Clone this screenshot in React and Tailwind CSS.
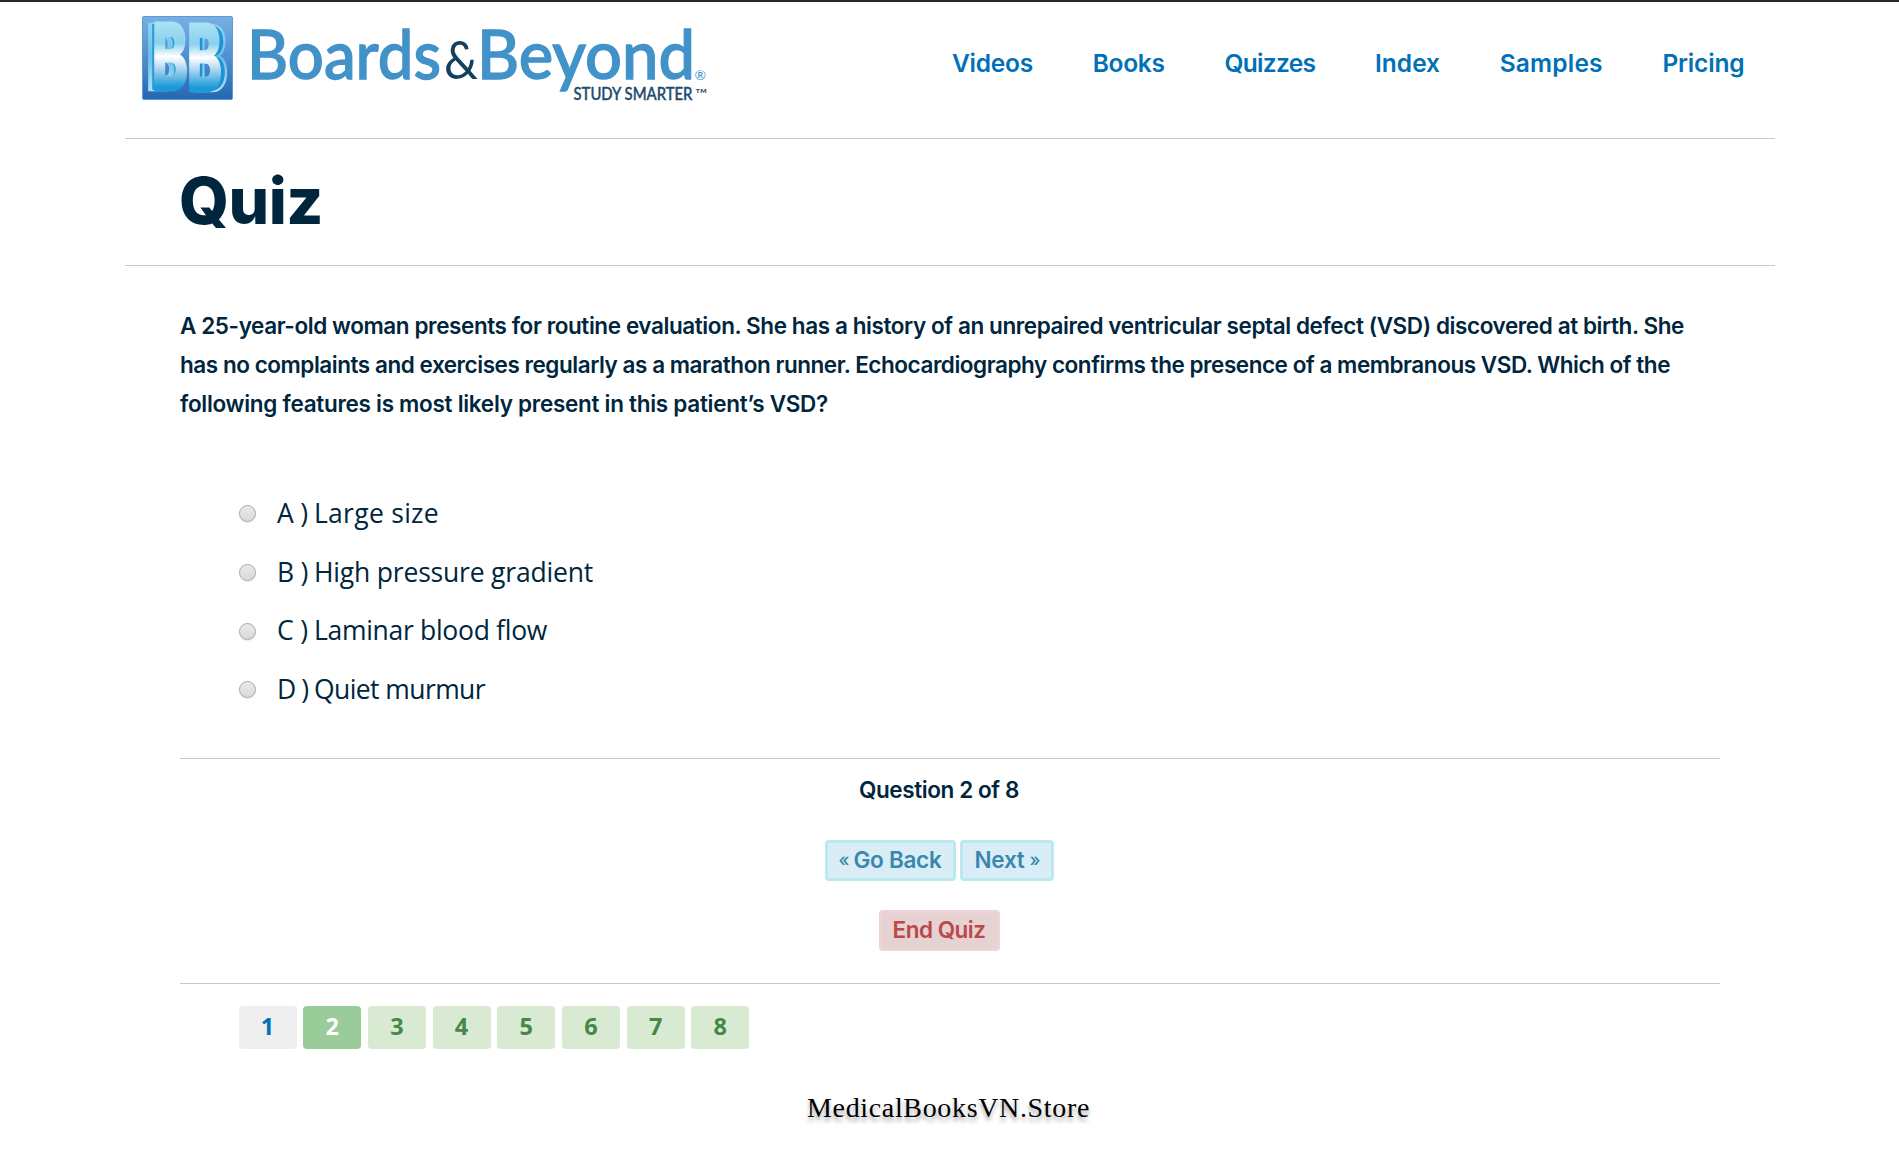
import { useLayoutEffect, useRef, useState } from "react";

const NAV = [
  { label: "Videos", width: 81 },
  { label: "Books", width: 72 },
  { label: "Quizzes", width: 91 },
  { label: "Index", width: 65 },
  { label: "Samples", width: 103 },
  { label: "Pricing", width: 82 },
];

const QUESTION = [
  {
    text: "A 25-year-old woman presents for routine evaluation. She has a history of an unrepaired ventricular septal defect (VSD) discovered at birth. She",
    width: 1504,
  },
  {
    text: "has no complaints and exercises regularly as a marathon runner. Echocardiography confirms the presence of a membranous VSD. Which of the",
    width: 1490,
  },
  {
    text: "following features is most likely present in this patient’s VSD?",
    width: 648,
  },
];

const OPTIONS = [
  { key: "A )", text: "Large size", width: 125 },
  { key: "B )", text: "High pressure gradient", width: 279 },
  { key: "C )", text: "Laminar blood flow", width: 233 },
  { key: "D )", text: "Quiet murmur", width: 171 },
];

// Spreads or tightens the tracking so that the text fills the given width.
function Fit({ width, className = "", children }) {
  const ref = useRef(null);
  const [spacing, setSpacing] = useState(0);
  useLayoutEffect(() => {
    const natural = ref.current.getBoundingClientRect().width;
    setSpacing((width - natural) / children.length);
  }, []);
  return (
    <span
      ref={ref}
      className={"inline-block whitespace-pre " + className}
      style={{ letterSpacing: spacing + "px" }}
    >
      {children}
    </span>
  );
}

function LogoB({ x, y, w, h, fill, stroke }) {
  return (
    <text
      transform={`translate(${x} ${y}) scale(${w / 61} ${h / 72.7})`}
      fontFamily="Inter, sans-serif"
      fontWeight="800"
      fontSize="100"
      fill={fill}
      stroke={stroke}
      strokeWidth={stroke ? 3 : 0}
      strokeLinejoin="round"
    >
      B
    </text>
  );
}

function Logo() {
  return (
    <svg width="570" height="92" viewBox="140 12 570 92" className="block">
      <defs>
        <linearGradient id="tile" x1="0" y1="0" x2="0" y2="1">
          <stop offset="0" stopColor="#78b0e2" />
          <stop offset="0.5" stopColor="#4f8fd0" />
          <stop offset="1" stopColor="#2666b0" />
        </linearGradient>
        <linearGradient id="face" gradientUnits="userSpaceOnUse" x1="0" y1="-73" x2="0" y2="0">
          <stop offset="0" stopColor="#a8e2f4" />
          <stop offset="0.3" stopColor="#8bd0ee" />
          <stop offset="0.5" stopColor="#ffffff" />
          <stop offset="0.64" stopColor="#c3e0f4" />
          <stop offset="0.95" stopColor="#1b9ad9" />
        </linearGradient>
        <linearGradient id="side" gradientUnits="userSpaceOnUse" x1="0" y1="-73" x2="0" y2="0">
          <stop offset="0" stopColor="#8fd3f0" />
          <stop offset="0.5" stopColor="#6cc0ea" />
          <stop offset="1" stopColor="#a9dff5" />
        </linearGradient>
      </defs>
      <rect x="142.5" y="16.5" width="90" height="83" rx="1.5" fill="url(#tile)" stroke="#5b9bd6" />
      <LogoB x={146} y={90} w={32} h={66} fill="url(#side)" stroke="url(#side)" />
      <LogoB x={149} y={90} w={34} h={66} fill="#2b9cdb" />
      <LogoB x={152} y={90} w={33} h={67} fill="url(#face)" stroke="url(#face)" />
      <LogoB x={191} y={91} w={34} h={66} fill="url(#side)" stroke="url(#side)" />
      <LogoB x={189.5} y={91} w={34} h={66} fill="#1f93d6" />
      <LogoB x={187} y={91} w={32} h={67} fill="url(#face)" stroke="url(#face)" />
      <g fontFamily="Lato, sans-serif">
        <g fill="#4292ca" stroke="#4292ca" strokeWidth="1.3" fontSize="67" fontWeight="500">
          <text x="247" y="78.5" textLength="194" lengthAdjust="spacingAndGlyphs">Boards</text>
          <text x="477" y="78.5" textLength="218" lengthAdjust="spacingAndGlyphs">Beyond</text>
        </g>
        <text x="444" y="79" fontSize="53" fill="#143f5f" textLength="34" lengthAdjust="spacingAndGlyphs">&amp;</text>
        <text x="694.5" y="80" fontSize="14" fill="#4292ca">®</text>
        <text x="573.5" y="100" fontSize="16.5" fontWeight="500" fill="#1d4a6b" stroke="#1d4a6b" strokeWidth="0.4" textLength="119" lengthAdjust="spacingAndGlyphs">STUDY SMARTER</text>
        <text x="695" y="99" fontSize="14" fill="#1d4a6b" textLength="12" lengthAdjust="spacingAndGlyphs">™</text>
      </g>
    </svg>
  );
}

function Radio() {
  return (
    <span className="mt-[1px] block size-[17px] rounded-full border border-[#a9a9a9] bg-linear-to-b from-[#e9e9e9] to-[#dadada] shadow-[0_1px_1px_rgba(0,0,0,0.1)]" />
  );
}

export default function App() {
  return (
    <div className="h-[1160px] w-[1899px] overflow-hidden border-t-2 border-[#2a2829] bg-white font-['Inter',sans-serif] text-[#00263e]">
      <header className="ml-[125px] flex h-[137px] w-[1650px] items-start border-b border-[#c8c8c8] pl-[15px] pt-[10px]">
        <Logo />
        <nav className="ml-[242px] mt-[32px] flex gap-[59.7px] text-[24.5px] font-semibold leading-[38px] text-[#0070b8]">
          {NAV.map((n) => (
            <a key={n.label} href="#">
              <Fit width={n.width}>{n.label}</Fit>
            </a>
          ))}
        </nav>
      </header>

      <div className="ml-[125px] flex h-[127px] w-[1650px] items-center border-b border-[#c8c8c8] pb-[3px] pl-[54px]">
        <h1 className="text-[64px] font-extrabold leading-[80px]">
          <Fit width={144}>Quiz</Fit>
        </h1>
      </div>

      <main className="ml-[180px] w-[1540px] pt-[40px]">
        <p className="text-[22.5px] font-semibold leading-[39px]">
          {QUESTION.map((q) => (
            <Fit key={q.text} width={q.width} className="align-top">
              {q.text}
            </Fit>
          ))}
        </p>

        <ul className="mt-[61px] pl-[59px] font-['Open_Sans',sans-serif] text-[26.5px] leading-[58.7px]">
          {OPTIONS.map((o) => (
            <li key={o.key} className="flex h-[58.7px] items-center">
              <Radio />
              <Fit width={31} className="ml-[21px]">{o.key}</Fit>
              <Fit width={o.width} className="ml-[6px]">{o.text}</Fit>
            </li>
          ))}
        </ul>

        <section className="mt-[39px] flex h-[226px] flex-col items-center border-y border-[#c8c8c8] pr-[22px] pt-[11px] text-[22.5px] font-semibold leading-[39px]">
          <Fit width={160}>Question 2 of 8</Fit>
          <div className="mt-[31px] flex gap-1 leading-[33px] text-[#3a87ad]">
            <button className="flex h-[41px] w-[131px] justify-center gap-[6px] rounded-[4px] border-3 border-[#bce8f1] bg-[#d9edf7]">
              <Fit width={9} className="text-[18px] font-medium">«</Fit>
              <Fit width={88}>Go Back</Fit>
            </button>
            <button className="flex h-[41px] w-[94px] justify-center gap-[5px] rounded-[4px] border-3 border-[#bce8f1] bg-[#d9edf7]">
              <Fit width={50}>Next</Fit>
              <Fit width={9} className="text-[18px] font-medium">»</Fit>
            </button>
          </div>
          <button className="mt-[29px] flex h-[41px] w-[121px] justify-center rounded-[4px] border-3 border-[#eed3d7] bg-[#e6d1d3] leading-[33px] text-[#b94a48]">
            <Fit width={93}>End Quiz</Fit>
          </button>
        </section>

        <div className="ml-[58.5px] mt-[22px] flex gap-[6.7px] font-['Open_Sans',sans-serif] text-[23.5px] font-bold leading-[41px]">
          {[1, 2, 3, 4, 5, 6, 7, 8].map((n) => (
            <span
              key={n}
              className={
                "h-[43px] w-[58px] rounded-[4px] text-center " +
                (n === 1
                  ? "bg-[#eeeeee] text-[#0070b8]"
                  : n === 2
                    ? "bg-[#99cc99] text-white"
                    : "bg-[#d9ead3] text-[#468847]")
              }
            >
              {n}
            </span>
          ))}
        </div>
      </main>

      <footer className="ml-[807px] mt-[40px] font-['Liberation_Serif',serif] text-[28px] leading-[38px] text-black [text-shadow:0_4px_4px_rgba(0,0,0,0.35)]">
        <Fit width={283}>MedicalBooksVN.Store</Fit>
      </footer>
    </div>
  );
}
